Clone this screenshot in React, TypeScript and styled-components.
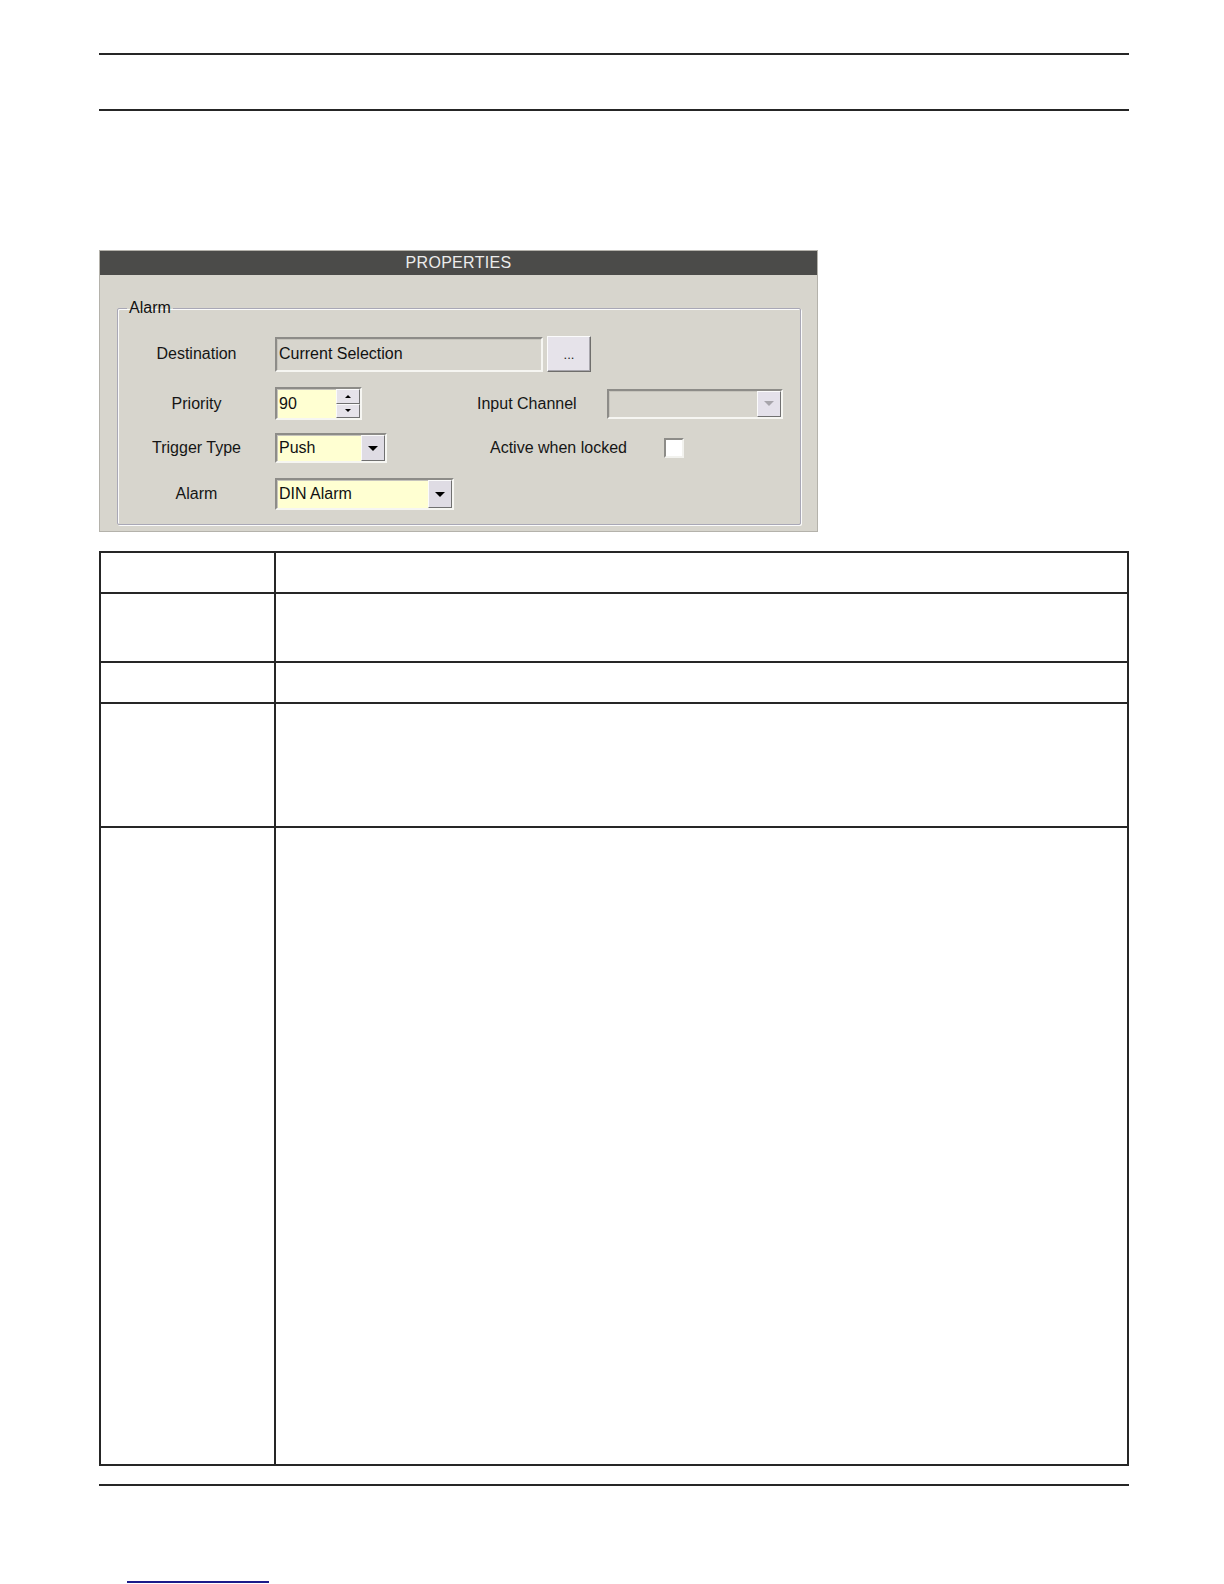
import React, { FC } from 'react';
import styled, { createGlobalStyle } from 'styled-components';

const GlobalStyle = createGlobalStyle`
    html, body {
        margin: 0;
        background: #fff;
        font-family: "Liberation Sans", Arial, sans-serif;
        overflow: hidden;
    }
`;

const Page = styled.div`
    width: 1030px;
    padding: 53px 0 0 99px;
`;

const Rule = styled.div<{ gap?: number }>`
    height: 2px;
    background: #262626;
    margin-top: ${p => p.gap || 0}px;
`;

const Dialog = styled.div`
    width: 719px;
    margin-top: 139px;
    background: #d7d5cd;
    border: 1px solid #b4b2ab;
    box-sizing: border-box;
    padding-bottom: 6px;
`;

const TitleBar = styled.div`
    height: 24px;
    background: #4b4b49;
    color: #ececec;
    font-size: 16px;
    letter-spacing: 0.3px;
    line-height: 24px;
    text-align: center;
`;

const Group = styled.fieldset`
    margin: 24px 16px 0 17px;
    padding: 19px 0 14px 13px;
    border: 1px solid #a9a8b6;
    box-shadow: inset 1px 1px 0 #fbfbfb, 1px 1px 0 #fbfbfb;
    border-radius: 2px;
`;

const Legend = styled.legend`
    margin-left: -4px;
    padding: 0 2px;
    font-size: 16px;
    line-height: 18px;
    color: #111;
`;

const Row = styled.div<{ h: number; mt?: number }>`
    display: flex;
    align-items: center;
    height: ${p => p.h}px;
    margin-top: ${p => p.mt || 0}px;
`;

const Label = styled.span<{ w?: number; ml?: number; center?: boolean }>`
    width: ${p => (p.w ? `${p.w}px` : 'auto')};
    margin-left: ${p => p.ml || 0}px;
    text-align: ${p => (p.center ? 'center' : 'left')};
    font-size: 16px;
    color: #151515;
    flex-shrink: 0;
`;

const Sunken = styled.div<{ w: number; h: number; bg: string; ml?: number }>`
    display: flex;
    align-items: center;
    box-sizing: border-box;
    width: ${p => p.w}px;
    height: ${p => p.h}px;
    margin-left: ${p => p.ml || 0}px;
    background: ${p => p.bg};
    border: 2px solid;
    border-color: #8d8c88 #f6f6f2 #f6f6f2 #8d8c88;
    box-shadow: inset 1px 1px 0 #c6c4bc;
    font-size: 16px;
    color: #111;
    padding-left: 2px;
    flex-shrink: 0;
`;

const Value = styled.span`
    flex: 1;
`;

const RaisedButton = styled.div<{ w: number; h: number; ml?: number }>`
    box-sizing: border-box;
    display: flex;
    align-items: center;
    justify-content: center;
    width: ${p => p.w}px;
    height: ${p => p.h}px;
    margin-left: ${p => p.ml || 0}px;
    background: #e6e3ea;
    border: 1px solid;
    border-color: #fbfbfb #6f6e6c #6f6e6c #fbfbfb;
    box-shadow: inset -1px -1px 0 #a8a6ad;
    font-size: 13px;
    color: #222;
    flex-shrink: 0;
`;

const ArrowButton = styled.div<{ disabled?: boolean }>`
    box-sizing: border-box;
    width: 24px;
    height: 100%;
    display: flex;
    align-items: center;
    justify-content: center;
    background: ${p => (p.disabled ? '#e4e1ea' : '#dfdce4')};
    border: 1px solid;
    border-color: #fbfbfb #707070 #707070 #fbfbfb;
`;

const Triangle = styled.span<{ up?: boolean; size: number; color: string }>`
    width: 0;
    height: 0;
    border-left: ${p => p.size}px solid transparent;
    border-right: ${p => p.size}px solid transparent;
    ${p => (p.up ? 'border-bottom' : 'border-top')}: ${p => p.size}px solid ${p => p.color};
`;

const SpinStack = styled.div`
    display: flex;
    flex-direction: column;
    height: 100%;
    width: 24px;
`;

const SpinHalf = styled.div`
    flex: 1;
    box-sizing: border-box;
    display: flex;
    align-items: center;
    justify-content: center;
    background: #e6e3ea;
    border: 1px solid;
    border-color: #fbfbfb #707070 #707070 #fbfbfb;
`;

const Check = styled.div<{ ml: number }>`
    box-sizing: border-box;
    width: 20px;
    height: 20px;
    margin-left: ${p => p.ml}px;
    background: #fff;
    border: 2px solid;
    border-color: #8d8c88 #f2f2ee #f2f2ee #8d8c88;
`;

const Table = styled.table`
    margin-top: 19px;
    width: 1030px;
    border-collapse: collapse;
    table-layout: fixed;
`;

const Cell = styled.td<{ h: number }>`
    border: 2px solid #262626;
    height: ${p => p.h}px;
    padding: 0;
`;

const FooterLink = styled.div`
    width: 142px;
    height: 2px;
    margin: 95px 0 0 28px;
    background: #1b1b8a;
`;

const Combo: FC<{ w: number; h: number; value?: string; bg: string; disabled?: boolean; ml?: number }> = ({ w, h, value, bg, disabled, ml }) => (
    <Sunken w={w} h={h} bg={bg} ml={ml}>
        <Value>{value}</Value>
        <ArrowButton disabled={disabled}>
            <Triangle size={5} color={disabled ? '#a7a5ab' : '#000'} />
        </ArrowButton>
    </Sunken>
);

const rowHeights = [39, 67, 39, 122, 636];

const App: FC = () => (
    <>
        <GlobalStyle />
        <Page>
            <Rule />
            <Rule gap={54} />
            <Dialog>
                <TitleBar>PROPERTIES</TitleBar>
                <Group>
                    <Legend>Alarm</Legend>
                    <Row h={36}>
                        <Label w={131} center>Destination</Label>
                        <Sunken w={268} h={35} bg="#d7d5cd" ml={13}>
                            <Value>Current Selection</Value>
                        </Sunken>
                        <RaisedButton w={44} h={36} ml={4}>...</RaisedButton>
                    </Row>
                    <Row h={33} mt={15}>
                        <Label w={131} center>Priority</Label>
                        <Sunken w={87} h={33} bg="#ffffd2" ml={13}>
                            <Value>90</Value>
                            <SpinStack>
                                <SpinHalf><Triangle up size={3} color="#000" /></SpinHalf>
                                <SpinHalf><Triangle size={3} color="#000" /></SpinHalf>
                            </SpinStack>
                        </Sunken>
                        <Label ml={115}>Input Channel</Label>
                        <Combo w={176} h={30} bg="#d7d5cd" disabled ml={30} />
                    </Row>
                    <Row h={30} mt={13}>
                        <Label w={131} center>Trigger Type</Label>
                        <Combo w={112} h={30} bg="#ffffd2" value="Push" ml={13} />
                        <Label ml={103}>Active when locked</Label>
                        <Check ml={37} />
                    </Row>
                    <Row h={32} mt={15}>
                        <Label w={131} center>Alarm</Label>
                        <Combo w={179} h={32} bg="#ffffd2" value="DIN Alarm" ml={13} />
                    </Row>
                </Group>
            </Dialog>
            <Table>
                <colgroup>
                    <col style={{ width: 175 }} />
                    <col />
                </colgroup>
                <tbody>
                    {rowHeights.map((h, i) => (
                        <tr key={i}>
                            <Cell h={h} />
                            <Cell h={h} />
                        </tr>
                    ))}
                </tbody>
            </Table>
            <Rule gap={18} />
            <FooterLink />
        </Page>
    </>
);

export default App;
